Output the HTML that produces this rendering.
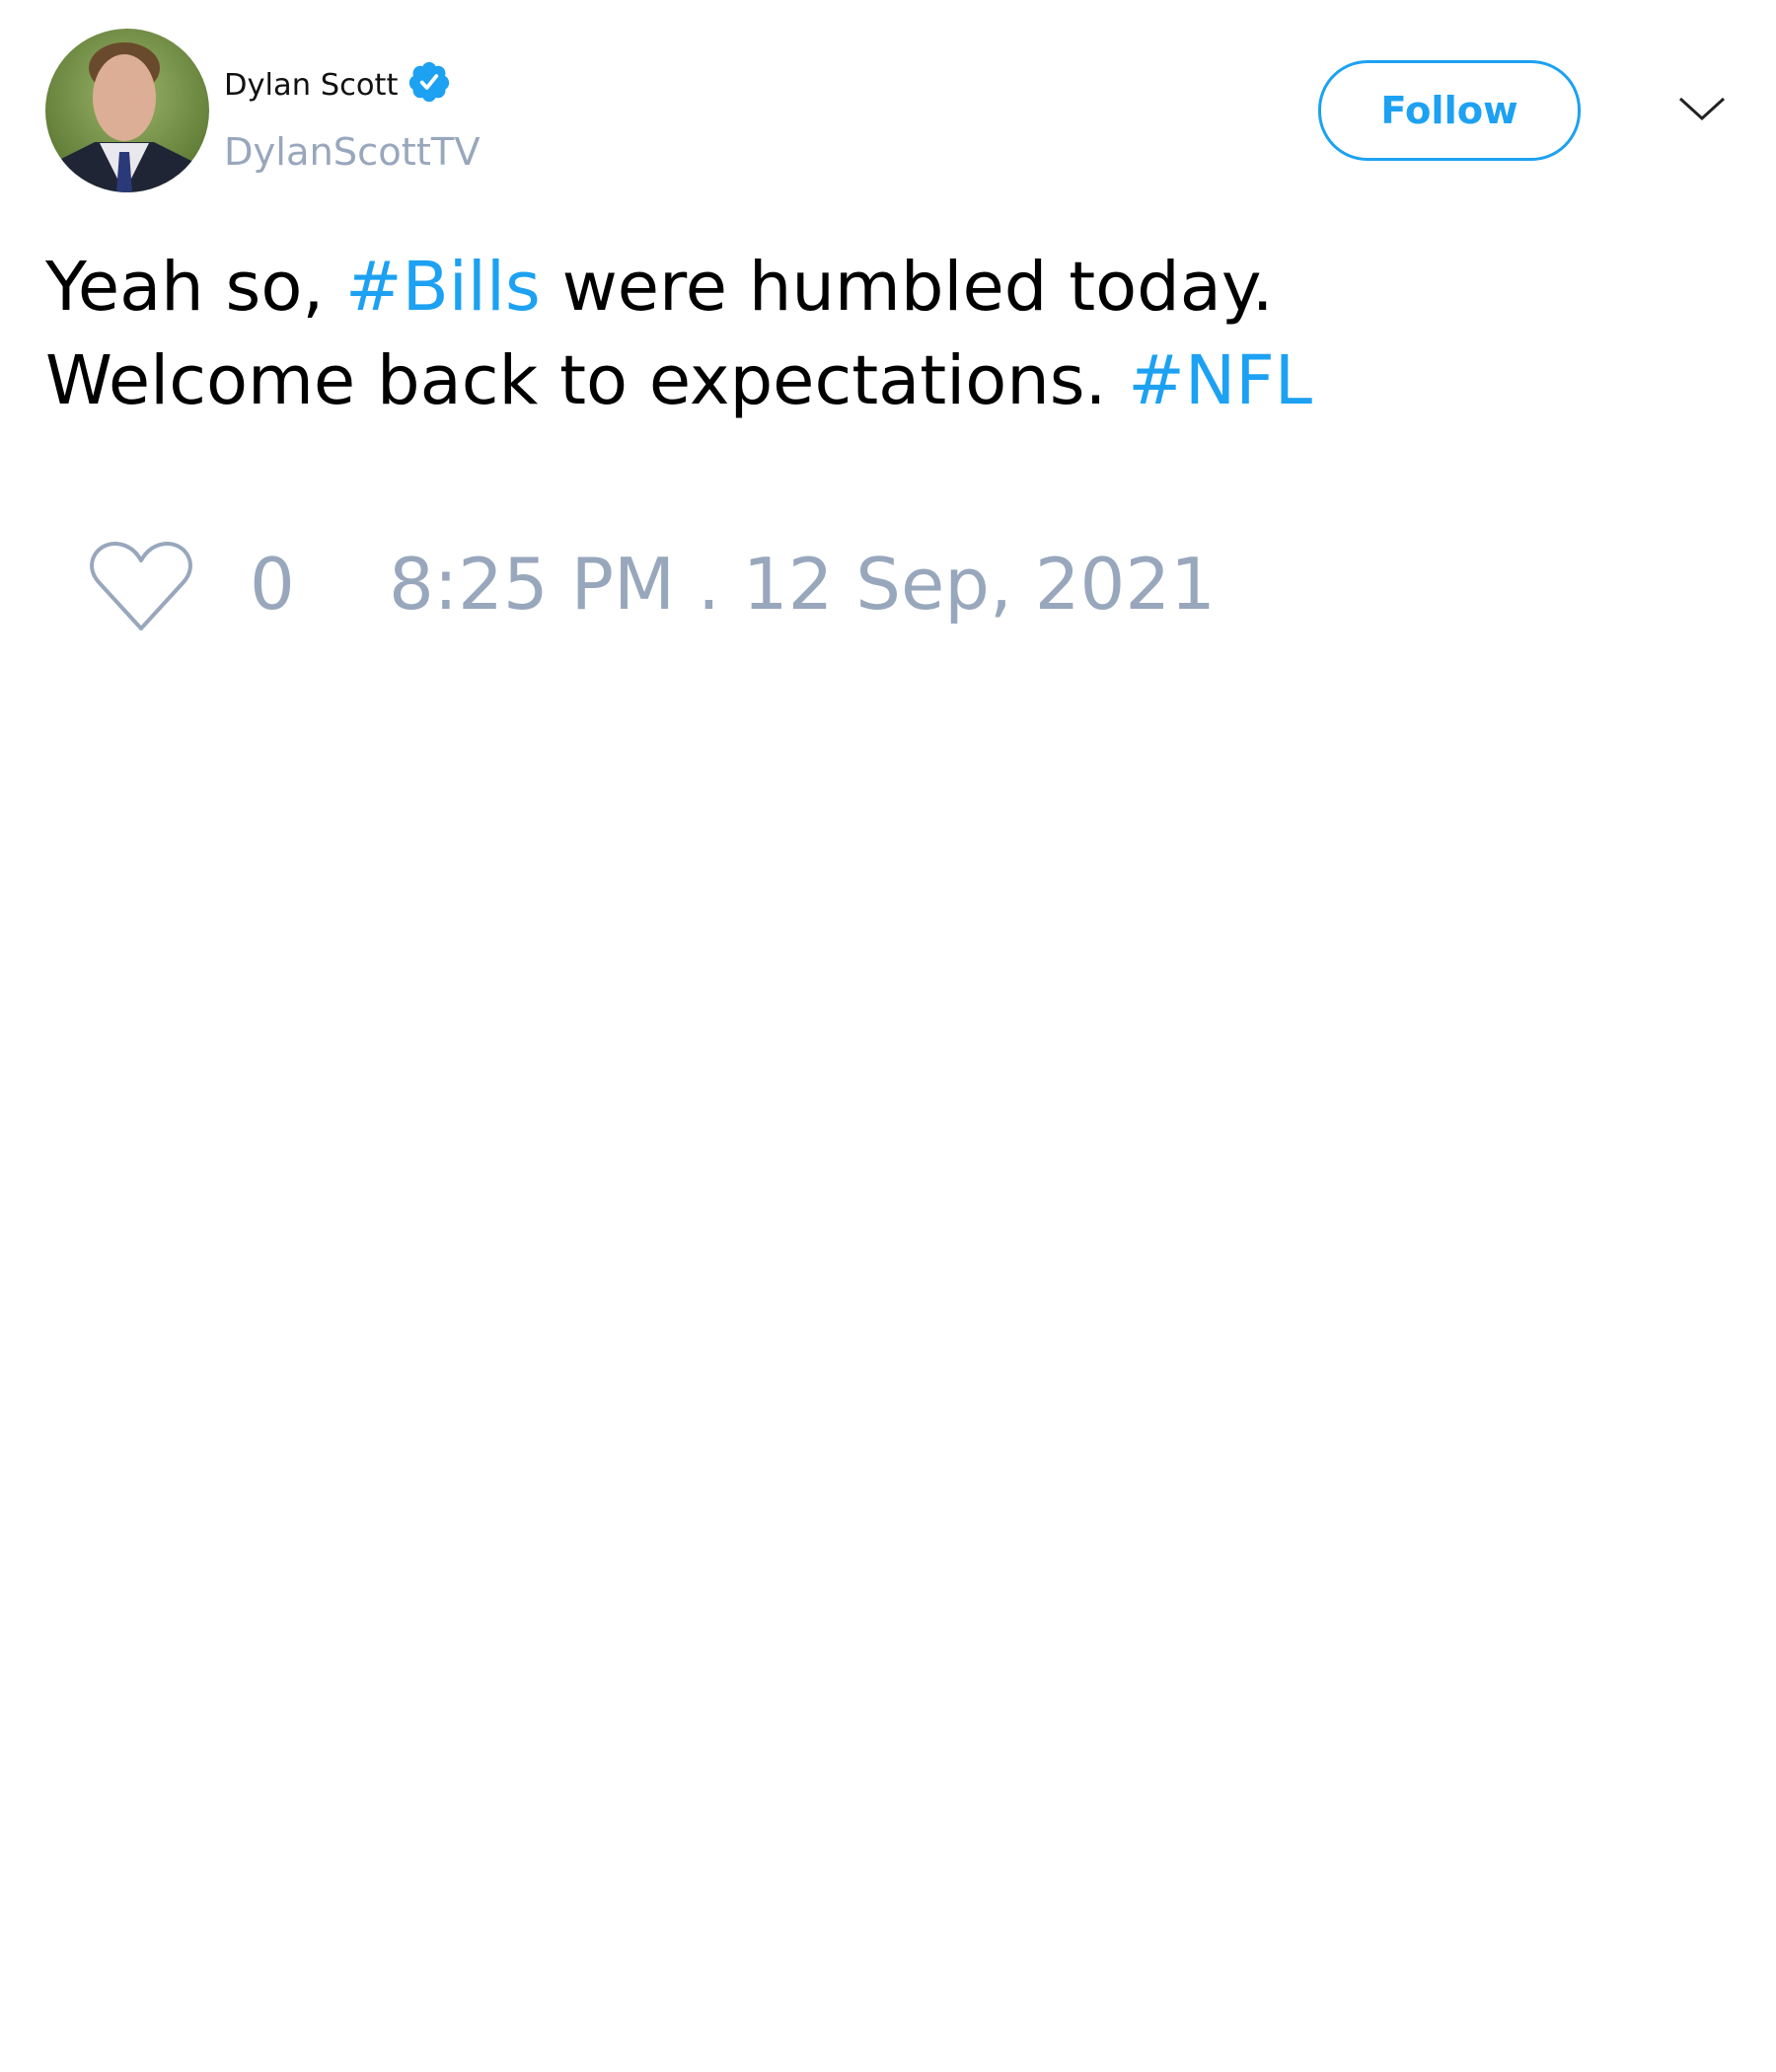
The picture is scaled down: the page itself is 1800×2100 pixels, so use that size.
<!DOCTYPE html>
<html><head><meta charset="utf-8"><style>
html,body{margin:0;padding:0;background:#fff;width:1800px;height:2100px;overflow:hidden;font-family:"DejaVu Sans","Liberation Sans",sans-serif;}
.abs{position:absolute;white-space:nowrap;}
</style></head><body>
<svg class="abs" style="left:46px;top:29px" width="166" height="166" viewBox="0 0 166 166">
<defs><clipPath id="c"><circle cx="83" cy="83" r="83"/></clipPath>
<radialGradient id="bg" cx="50%" cy="40%" r="60%"><stop offset="0" stop-color="#9cb46a"/><stop offset="1" stop-color="#5d7a34"/></radialGradient></defs>
<g clip-path="url(#c)">
<rect width="166" height="166" fill="url(#bg)"/>
<ellipse cx="80" cy="40" rx="36" ry="26" fill="#6a4a2c"/>
<ellipse cx="80" cy="70" rx="32" ry="44" fill="#dcae95"/>
<path d="M0 166 L10 135 L50 115 L110 115 L150 135 L166 166Z" fill="#1f2535"/>
<path d="M55 116 L80 166 L105 116Z" fill="#e8e8ee"/>
<path d="M75 125 L85 125 L88 166 L72 166Z" fill="#2a3a78"/>
</g></svg>
<div class="abs" style="left:227px;top:72px;font-size:30.5px;color:#111;line-height:1">Dylan Scott</div>
<svg class="abs" style="left:412px;top:60px" width="46" height="46" viewBox="0 0 24 24"><path fill="#1da1f2" d="M22.5 12.5c0-1.58-.875-2.95-2.148-3.6.154-.435.238-.905.238-1.4 0-2.21-1.710-3.998-3.818-3.998-.47 0-.92.084-1.336.25C14.818 2.415 13.51 1.5 12 1.5s-2.816.917-3.437 2.250c-.415-.165-.866-.25-1.336-.25-2.110 0-3.818 1.790-3.818 4 0 .494.083.964.237 1.4-1.272.65-2.147 2.018-2.147 3.600 0 1.495.782 2.798 1.942 3.486-.02.17-.032.34-.032.514 0 2.210 1.708 4 3.818 4 .47 0 .92-.086 1.335-.25.62 1.334 1.926 2.250 3.437 2.250 1.512 0 2.818-.916 3.437-2.250.415.163.865.248 1.336.248 2.110 0 3.818-1.790 3.818-4 0-.174-.012-.344-.033-.513 1.158-.687 1.943-1.990 1.943-3.484z"/><path fill="none" stroke="#fff" stroke-width="2" stroke-linecap="round" stroke-linejoin="round" d="M8.2 12.3l2.6 2.8 5-6.2"/></svg>
<div class="abs" style="left:227px;top:136px;font-size:38.4px;color:#98a7bc;line-height:1">DylanScottTV</div>
<div class="abs" style="left:1336px;top:61px;width:260px;height:96px;border:3px solid #1da1f2;border-radius:50px;box-sizing:content-box"></div>
<div class="abs" style="left:1339px;top:94px;width:260px;text-align:center;font-size:38.4px;font-weight:bold;color:#1da1f2;line-height:1">Follow</div>
<svg class="abs" style="left:1700px;top:96px" width="50" height="28" viewBox="0 0 50 28"><path d="M3 4 L25 24 L47 4" fill="none" stroke="#222" stroke-width="3"/></svg>
<div class="abs" style="left:46px;top:244px;font-size:68.7px;color:#000;line-height:95px">Yeah so, <span style="color:#1da1f2">#Bills</span> were humbled today.<br>Welcome back to expectations. <span style="color:#1da1f2">#NFL</span></div>
<svg class="abs" style="left:90px;top:548px" width="106" height="92" viewBox="0 0 106 92"><path d="M53 89 L10 42 C-6 24 8 2 28 3 C40 4 48 11 53 20 C58 11 66 4 78 3 C98 2 112 24 96 42 Z" fill="none" stroke="#98a7bc" stroke-width="4" stroke-linejoin="round"/></svg>
<div class="abs" style="left:253px;top:556px;font-size:72px;color:#98a7bc;line-height:1">0</div>
<div class="abs" style="left:394px;top:556px;font-size:72px;color:#98a7bc;line-height:1">8:25 PM . 12 Sep, 2021</div>
</body></html>
